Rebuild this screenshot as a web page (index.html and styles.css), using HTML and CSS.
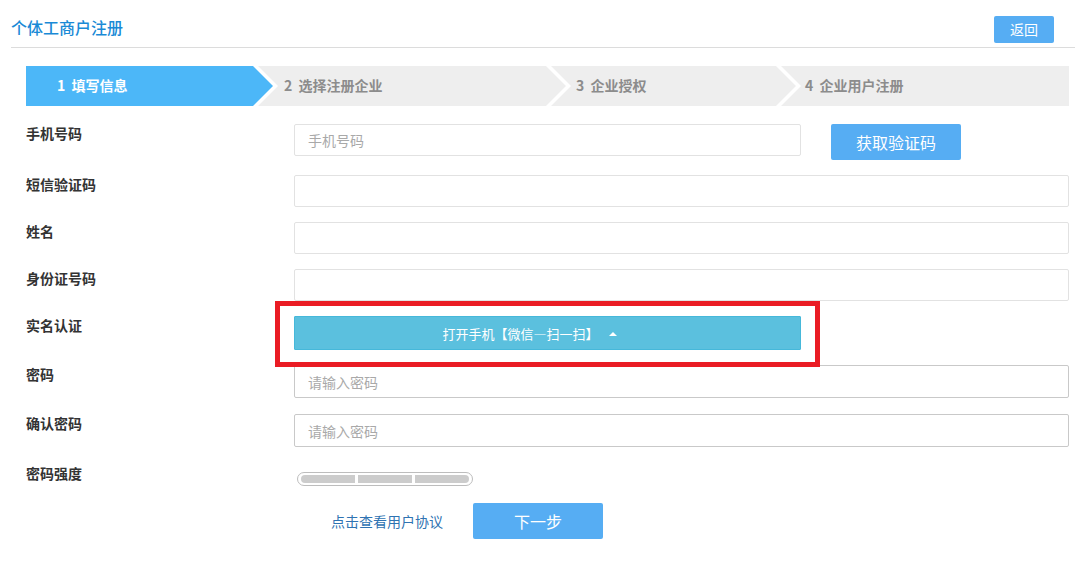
FILE: index.html
```html
<!DOCTYPE html>
<html lang="zh-CN">
<head>
<meta charset="utf-8">
<title>个体工商户注册</title>
<link rel="stylesheet" href="styles.css">
</head>
<body>
<div class="page">
  <div class="header">
    <h1 class="title">个体工商户注册</h1>
    <button class="btn btn-back" type="button">返回</button>
  </div>
  <div class="main">
    <div class="steps">
      <div class="step step-first active">1&nbsp;&nbsp;填写信息</div>
      <div class="step step-2">2&nbsp;&nbsp;选择注册企业</div>
      <div class="step step-3">3&nbsp;&nbsp;企业授权</div>
      <div class="step step-last">4&nbsp;&nbsp;企业用户注册</div>
    </div>
    <form class="form">
      <div class="row">
        <label class="label">手机号码</label>
        <input class="input input-short" type="text" placeholder="手机号码">
        <button class="btn btn-code" type="button">获取验证码</button>
      </div>
      <div class="row">
        <label class="label">短信验证码</label>
        <input class="input" type="text">
      </div>
      <div class="row">
        <label class="label">姓名</label>
        <input class="input" type="text">
      </div>
      <div class="row">
        <label class="label">身份证号码</label>
        <input class="input" type="text">
      </div>
      <div class="row">
        <label class="label">实名认证</label>
        <div class="scan-wrap">
          <button class="btn btn-scan" type="button">打开手机【微信—扫一扫】<span class="caret"></span></button>
          <div class="highlight"></div>
        </div>
      </div>
      <div class="row">
        <label class="label">密码</label>
        <input class="input input-pw" type="password" placeholder="请输入密码">
      </div>
      <div class="row">
        <label class="label">确认密码</label>
        <input class="input input-pw" type="password" placeholder="请输入密码">
      </div>
      <div class="row row-strength">
        <label class="label">密码强度</label>
        <div class="strength">
          <span class="seg seg-1"></span>
          <span class="seg"></span>
          <span class="seg seg-3"></span>
        </div>
      </div>
      <div class="actions">
        <a class="agreement" href="#">点击查看用户协议</a>
        <button class="btn btn-next" type="button">下一步</button>
      </div>
    </form>
  </div>
</div>
</body>
</html>
```
FILE: styles.css
```css
* { box-sizing: border-box; }
html, body {
  margin: 0;
  padding: 0;
  background: #fff;
}
body {
  font-family: "Noto Sans CJK SC", "Noto Sans", "Liberation Sans", sans-serif;
  font-size: 13px;
  color: #333;
  width: 1075px;
  height: 567px;
  overflow: hidden;
}

.header {
  display: flex;
  justify-content: space-between;
  align-items: flex-start;
  margin-left: 11px;
  height: 48px;
  padding-top: 16px;
  padding-right: 21px;
  border-bottom: 1px solid #dcdcdc;
}
.title {
  margin: 0;
  font-size: 16px;
  font-weight: 500;
  line-height: 22px;
  color: #1a8ad6;
}

.btn {
  border: 0;
  border-radius: 2px;
  background: #56adf3;
  color: #fff;
  font-family: inherit;
  padding: 0;
  cursor: pointer;
}
.btn-back {
  width: 60px;
  height: 27px;
  font-size: 14px;
  line-height: 27px;
}

.main {
  padding: 18px 6px 0 26px;
}

.steps {
  display: flex;
  height: 40px;
}
.step {
  height: 40px;
  line-height: 39px;
  background: #eeeeee;
  color: #8c8c8c;
  font-weight: bold;
  font-size: 14px;
  padding-left: 26px;
  margin-left: -15px;
  clip-path: polygon(0 0, calc(100% - 20px) 0, 100% 50%, calc(100% - 20px) 100%, 0 100%, 20px 50%);
}
.step-first {
  margin-left: 0;
  padding-left: 31px;
  width: 247px;
  position: relative;
  z-index: 1;
  clip-path: polygon(0 0, calc(100% - 20px) 0, 100% 50%, calc(100% - 20px) 100%, 0 100%);
}
.step.active {
  background: #4cb7f8;
  color: #fff;
}
.step-2 { width: 308px; }
.step-3 { width: 245px; padding-left: 25px; }
.step-last {
  flex: 1;
  padding-left: 24px;
  clip-path: polygon(0 0, 100% 0, 100% 100%, 0 100%, 20px 50%);
}

.form {
  margin-top: 18px;
}
.row {
  display: flex;
  align-items: flex-start;
  margin-bottom: 15px;
}
.label {
  flex: 0 0 268px;
  font-weight: bold;
  font-size: 14px;
  line-height: 18px;
  color: #333;
}
.input {
  flex: 1;
  height: 32px;
  border: 1px solid #e2e2e2;
  border-radius: 2px;
  padding: 0 13px;
  font-family: inherit;
  font-size: 14px;
  color: #333;
  outline: none;
}
.input::placeholder {
  color: #a9a9a9;
}
.input-short {
  flex: 0 0 507px;
}
.input-pw {
  height: 33px;
  border-color: #c9c9c9;
}
.row:nth-child(6) { margin-bottom: 16px; }
.row:nth-child(7) { margin-bottom: 17px; }

.btn-code {
  margin-left: 30px;
  width: 130px;
  height: 36px;
  font-size: 16px;
}

.scan-wrap {
  position: relative;
  width: 507px;
}
.btn-scan {
  display: block;
  width: 507px;
  height: 34px;
  background: #5bc0de;
  border: 1px solid #46b8da;
  font-size: 13px;
  padding-right: 36px;
  border-radius: 1px;
}
.caret {
  display: inline-block;
  width: 0;
  height: 0;
  margin-left: 10px;
  vertical-align: 3px;
  border-left: 4px solid transparent;
  border-right: 4px solid transparent;
  border-bottom: 4px solid #fff;
}
.highlight {
  position: absolute;
  left: -19px;
  top: -15px;
  right: -19px;
  bottom: -17px;
  border: 5px solid #ea1c24;
  pointer-events: none;
}

.row-strength {
  margin-bottom: 17px;
  height: 22px;
}
.strength {
  margin-top: 8px;
  margin-left: 3px;
  width: 176px;
  height: 14px;
  border: 1px solid #bdbdbd;
  border-radius: 7px;
  padding: 2px 3px;
  display: flex;
  gap: 3px;
}
.seg {
  flex: 1;
  height: 8px;
  background: #cccccc;
}
.seg-1 { border-radius: 4px 0 0 4px; }
.seg-3 { border-radius: 0 4px 4px 0; }

.actions {
  display: flex;
  align-items: center;
  padding-left: 305px;
}
.agreement {
  color: #2f73b2;
  text-decoration: none;
  font-size: 14px;
  line-height: 20px;
  width: 142px;
}
.btn-next {
  width: 130px;
  height: 36px;
  font-size: 16px;
}
```
